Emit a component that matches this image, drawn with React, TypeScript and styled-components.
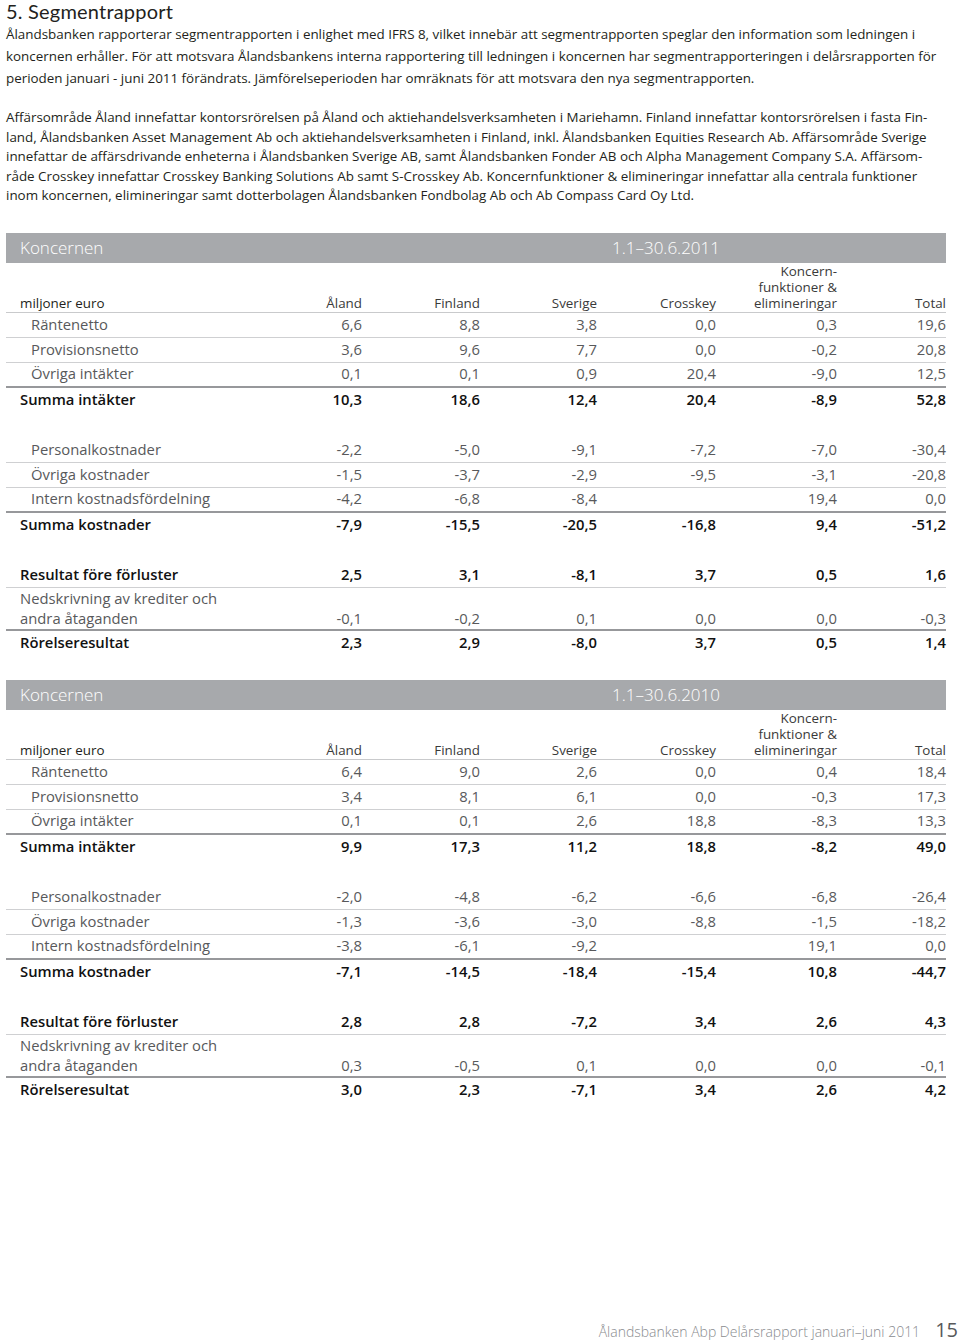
import React from "react";
import styled, { createGlobalStyle } from "styled-components";

const GlobalStyle = createGlobalStyle`
  html, body { margin: 0; padding: 0; background: #fff; }
  body { font-family: "Open Sans", "Noto Sans", "DejaVu Sans", sans-serif; color: #231f20; }
  * { box-sizing: border-box; }
`;

const COLS = "248px 108px 118px 117px 119px 121px 109px";

const Page = styled.div`
  width: 960px;
  min-height: 1342px;
  padding: 0 14px 0 6px;
  display: flex;
  flex-direction: column;
`;

const Title = styled.h1`
  margin: 0;
  font-family: Lato, "Open Sans", sans-serif;
  font-size: 20px;
  line-height: 23px;
  font-weight: 400;
  letter-spacing: 0.2px;
  color: #231f20;
`;

const Lead = styled.p`
  margin: 0;
  font-size: 13.4px;
  line-height: 22px;
  color: #231f20;
  white-space: nowrap;
`;

const Body = styled.p`
  margin: 19px 0 0;
  font-size: 13.4px;
  line-height: 19.5px;
  color: #231f20;
  white-space: nowrap;
`;

const Table = styled.section<{ $top: number }>`
  margin-top: ${(p) => p.$top}px;
  width: 940px;
`;

const Bar = styled.div`
  display: grid;
  grid-template-columns: ${COLS};
  height: 30px;
  align-items: center;
  background: #a7a9ac;
  color: #fff;
  font-size: 17px;
  font-weight: 300;
`;

const BarTitle = styled.span`
  grid-column: 1 / 5;
  padding-left: 14px;
`;

const BarPeriod = styled.span`
  grid-column: 5 / 8;
  padding-left: 15px;
`;

const Group = styled.div<{ $gap: number }>`
  margin-top: ${(p) => p.$gap}px;
`;

const HeadRow = styled.div`
  display: grid;
  grid-template-columns: ${COLS};
  align-items: end;
  height: 50px;
  padding: 0 3px 5px 0;
  border-bottom: 1px solid #c9cacc;
  font-size: 13.4px;
  line-height: 16px;
  color: #231f20;
`;

const HeadLabel = styled.span`
  padding-left: 14px;
  color: #231f20;
`;

const HeadCell = styled.span`
  text-align: right;
  color: #3a3a3a;
`;

const HeadLine = styled.span`
  display: block;
`;

type Kind = "item" | "sum" | "plain";
type Border = "thin" | "thick" | "none";

const Row = styled.div<{ $kind: Kind; $border: Border; $tall?: boolean }>`
  display: grid;
  grid-template-columns: ${COLS};
  align-items: end;
  height: ${(p) => (p.$tall ? 43 : p.$border === "none" ? 24 : 25)}px;
  padding: 0 3px ${(p) => (p.$tall ? 0 : 3)}px 0;
  font-size: 14.8px;
  line-height: ${(p) => (p.$tall ? "20.5px" : "20px")};
  font-weight: ${(p) => (p.$kind === "sum" ? 600 : 400)};
  color: ${(p) => (p.$kind === "sum" ? "#111" : "#58595b")};
  border-bottom: ${(p) =>
    p.$border === "thin"
      ? "1px solid #cfd0d2"
      : p.$border === "thick"
      ? "2px solid #97989b"
      : "none"};
`;

const Label = styled.span<{ $indent: boolean }>`
  padding-left: ${(p) => (p.$indent ? 25 : 14)}px;
  white-space: pre-line;
`;

const Value = styled.span`
  text-align: right;
`;

const Footer = styled.footer`
  margin-top: auto;
  display: flex;
  align-items: baseline;
  justify-content: flex-end;
  gap: 15px;
  margin-right: -12px;
  line-height: 20px;
`;

const FooterText = styled.span`
  font-size: 14px;
  color: #8a8c8f;
  font-weight: 300;
`;

const PageNo = styled.span`
  font-size: 20px;
  color: #58595b;
  font-weight: 400;
`;

type RowDef = {
  label: string;
  values: string[];
  kind: Kind;
  indent: boolean;
  border: Border;
  tall?: boolean;
};

type TableDef = { period: string; groups: RowDef[][] };

const mk = (
  label: string,
  values: string[],
  kind: Kind,
  indent: boolean,
  border: Border,
  tall?: boolean
): RowDef => ({ label, values, kind, indent, border, tall });

const buildTable = (period: string, v: string[][]): TableDef => ({
  period,
  groups: [
    [
      mk("Räntenetto", v[0], "item", true, "thin"),
      mk("Provisionsnetto", v[1], "item", true, "thin"),
      mk("Övriga intäkter", v[2], "item", true, "thick"),
      mk("Summa intäkter", v[3], "sum", false, "none"),
    ],
    [
      mk("Personalkostnader", v[4], "item", true, "thin"),
      mk("Övriga kostnader", v[5], "item", true, "thin"),
      mk("Intern kostnadsfördelning", v[6], "item", true, "thick"),
      mk("Summa kostnader", v[7], "sum", false, "none"),
    ],
    [
      mk("Resultat före förluster", v[8], "sum", false, "thin"),
      mk("Nedskrivning av krediter och\nandra åtaganden", v[9], "plain", false, "thick", true),
      mk("Rörelseresultat", v[10], "sum", false, "none"),
    ],
  ],
});

const tables: TableDef[] = [
  buildTable("1.1–30.6.2011", [
    ["6,6", "8,8", "3,8", "0,0", "0,3", "19,6"],
    ["3,6", "9,6", "7,7", "0,0", "-0,2", "20,8"],
    ["0,1", "0,1", "0,9", "20,4", "-9,0", "12,5"],
    ["10,3", "18,6", "12,4", "20,4", "-8,9", "52,8"],
    ["-2,2", "-5,0", "-9,1", "-7,2", "-7,0", "-30,4"],
    ["-1,5", "-3,7", "-2,9", "-9,5", "-3,1", "-20,8"],
    ["-4,2", "-6,8", "-8,4", "", "19,4", "0,0"],
    ["-7,9", "-15,5", "-20,5", "-16,8", "9,4", "-51,2"],
    ["2,5", "3,1", "-8,1", "3,7", "0,5", "1,6"],
    ["-0,1", "-0,2", "0,1", "0,0", "0,0", "-0,3"],
    ["2,3", "2,9", "-8,0", "3,7", "0,5", "1,4"],
  ]),
  buildTable("1.1–30.6.2010", [
    ["6,4", "9,0", "2,6", "0,0", "0,4", "18,4"],
    ["3,4", "8,1", "6,1", "0,0", "-0,3", "17,3"],
    ["0,1", "0,1", "2,6", "18,8", "-8,3", "13,3"],
    ["9,9", "17,3", "11,2", "18,8", "-8,2", "49,0"],
    ["-2,0", "-4,8", "-6,2", "-6,6", "-6,8", "-26,4"],
    ["-1,3", "-3,6", "-3,0", "-8,8", "-1,5", "-18,2"],
    ["-3,8", "-6,1", "-9,2", "", "19,1", "0,0"],
    ["-7,1", "-14,5", "-18,4", "-15,4", "10,8", "-44,7"],
    ["2,8", "2,8", "-7,2", "3,4", "2,6", "4,3"],
    ["0,3", "-0,5", "0,1", "0,0", "0,0", "-0,1"],
    ["3,0", "2,3", "-7,1", "3,4", "2,6", "4,2"],
  ]),
];

const headers = ["Åland", "Finland", "Sverige", "Crosskey"];
const groupGaps = [0, 26, 26];

const SegmentTable: React.FC<{ def: TableDef; top: number }> = ({ def, top }) => (
  <Table $top={top}>
    <Bar>
      <BarTitle>Koncernen</BarTitle>
      <BarPeriod>{def.period}</BarPeriod>
    </Bar>
    <HeadRow>
      <HeadLabel>miljoner euro</HeadLabel>
      {headers.map((h) => (
        <HeadCell key={h}>{h}</HeadCell>
      ))}
      <HeadCell>
        <HeadLine>Koncern-</HeadLine>
        <HeadLine>funktioner &amp;</HeadLine>
        <HeadLine>elimineringar</HeadLine>
      </HeadCell>
      <HeadCell>Total</HeadCell>
    </HeadRow>
    {def.groups.map((g, gi) => (
      <Group key={gi} $gap={groupGaps[gi]}>
        {g.map((r) => (
          <Row key={r.label} $kind={r.kind} $border={r.border} $tall={r.tall}>
            <Label $indent={r.indent}>{r.label}</Label>
            {r.values.map((val, i) => (
              <Value key={i}>{val}</Value>
            ))}
          </Row>
        ))}
      </Group>
    ))}
  </Table>
);

export default function App() {
  return (
    <>
      <GlobalStyle />
      <Page>
        <Title>5. Segmentrapport</Title>
        <Lead>
          Ålandsbanken rapporterar segmentrapporten i enlighet med IFRS 8, vilket innebär att segmentrapporten speglar den information som ledningen i
          <br />
          koncernen erhåller. För att motsvara Ålandsbankens interna rapportering till ledningen i koncernen har segmentrapporteringen i delårsrapporten för
          <br />
          perioden januari - juni 2011 förändrats. Jämförelseperioden har omräknats för att motsvara den nya segmentrapporten.
        </Lead>
        <Body>
          Affärsområde Åland innefattar kontorsrörelsen på Åland och aktiehandelsverksamheten i Mariehamn. Finland innefattar kontorsrörelsen i fasta Fin-
          <br />
          land, Ålandsbanken Asset Management Ab och aktiehandelsverksamheten i Finland, inkl. Ålandsbanken Equities Research Ab. Affärsområde Sverige
          <br />
          innefattar de affärsdrivande enheterna i Ålandsbanken Sverige AB, samt Ålandsbanken Fonder AB och Alpha Management Company S.A. Affärsom-
          <br />
          råde Crosskey innefattar Crosskey Banking Solutions Ab samt S-Crosskey Ab. Koncernfunktioner &amp; elimineringar innefattar alla centrala funktioner
          <br />
          inom koncernen, elimineringar samt dotterbolagen Ålandsbanken Fondbolag Ab och Ab Compass Card Oy Ltd.
        </Body>
        {tables.map((t, i) => (
          <SegmentTable key={t.period} def={t} top={i === 0 ? 27 : 25} />
        ))}
        <Footer>
          <FooterText>Ålandsbanken Abp Delårsrapport januari–juni 2011</FooterText>
          <PageNo>15</PageNo>
        </Footer>
      </Page>
    </>
  );
}
